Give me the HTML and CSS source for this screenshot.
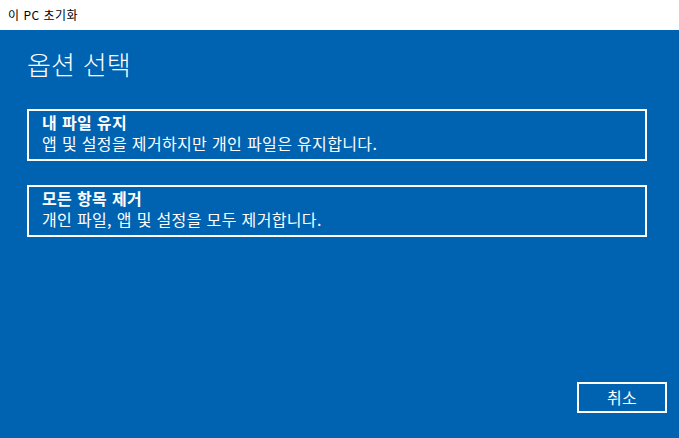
FILE: index.html
```html
<!DOCTYPE html>
<html lang="ko">
<head>
<meta charset="utf-8">
<title>이 PC 초기화</title>
<link rel="stylesheet" href="styles.css">
</head>
<body>
<div class="titlebar">이 PC 초기화</div>
<main class="main">
  <h1 class="heading">옵션 선택</h1>
  <div class="options">
    <div class="option">
      <div class="option-title">내 파일 유지</div>
      <div class="option-desc">앱 및 설정을 제거하지만 개인 파일은 유지합니다.</div>
    </div>
    <div class="option">
      <div class="option-title">모든 항목 제거</div>
      <div class="option-desc">개인 파일, 앱 및 설정을 모두 제거합니다.</div>
    </div>
  </div>
  <div class="footer">
    <button class="btn">취소</button>
  </div>
</main>
</body>
</html>
```

FILE: styles.css
```css
* { box-sizing: border-box; }
html, body {
  margin: 0;
  padding: 0;
  width: 679px;
  height: 438px;
  overflow: hidden;
  font-family: "Noto Sans CJK KR", "Noto Sans", sans-serif;
}
.titlebar {
  height: 30px;
  background: #ffffff;
  color: #000000;
  font-size: 12px;
  letter-spacing: 0.5px;
  line-height: 29px;
  padding-left: 8px;
}
.main {
  height: 408px;
  background: #0063b1;
  color: #ffffff;
  display: flex;
  flex-direction: column;
  padding: 18px 12px 25px 27px;
}
.heading {
  margin: 0;
  font-size: 26px;
  font-weight: 300;
  line-height: 32px;
  letter-spacing: 0.2px;
}
.options {
  margin-top: 29px;
  margin-right: 20px;
  display: flex;
  flex-direction: column;
  gap: 24px;
}
.option {
  border: 2px solid #ffffff;
  height: 52px;
  padding: 1px 13px 5px;
  font-size: 16px;
  letter-spacing: 0.35px;
  line-height: 21px;
}
.option-title {
  font-weight: 700;
}
.footer {
  margin-top: auto;
  display: flex;
  justify-content: flex-end;
}
.btn {
  width: 90px;
  height: 31px;
  background: transparent;
  border: 2px solid #ffffff;
  color: #ffffff;
  font-family: inherit;
  font-size: 16px;
  letter-spacing: 0.3px;
  padding: 0;
  line-height: 25px;
}
```
